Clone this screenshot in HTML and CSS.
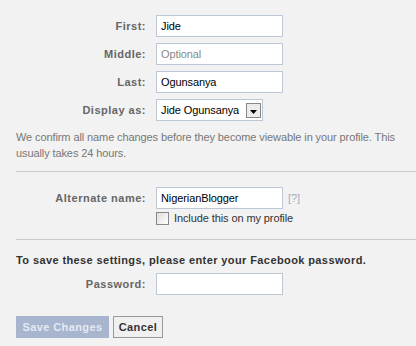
FILE: index.html
```html
<!DOCTYPE html>
<html>

<head>
  <title>Name Settings</title>
  <link rel="stylesheet" href="styles.css">
</head>

<body>
  <form class="settings">
    <div class="row">
      <label for="first">First:</label>
      <input type="text" id="first" class="field" value="Jide">
    </div>
    <div class="row">
      <label for="middle">Middle:</label>
      <input type="text" id="middle" class="field" placeholder="Optional">
    </div>
    <div class="row">
      <label for="last">Last:</label>
      <input type="text" id="last" class="field" value="Ogunsanya">
    </div>
    <div class="row">
      <label>Display as:</label>
      <div class="select">
        <span>Jide Ogunsanya</span>
        <span class="select-btn">
          <svg width="7" height="4" viewBox="0 0 7 4"><path d="M0 0h7L3.5 4z" fill="#000"/></svg>
        </span>
      </div>
    </div>
    <p class="note">We confirm all name changes before they become viewable in your profile. This usually takes 24 hours.</p>

    <div class="section">
      <div class="row alt-row">
        <label for="alt">Alternate name:</label>
        <input type="text" id="alt" class="field" value="NigerianBlogger">
        <span class="help">[?]</span>
      </div>
      <div class="row check-row">
        <span class="box"></span>
        <span>Include this on my profile</span>
      </div>
    </div>

    <div class="section password">
      <p class="prompt">To save these settings, please enter your Facebook password.</p>
      <div class="row">
        <label for="pass">Password:</label>
        <input type="password" id="pass" class="field">
      </div>
      <div class="buttons">
        <button type="button" class="btn save">Save Changes</button>
        <button type="button" class="btn cancel">Cancel</button>
      </div>
    </div>
  </form>
</body>

</html>
```

FILE: styles.css
```css
body {
  margin: 0;
  padding: 15px 0 0 16px;
  background-color: #f2f2f2;
  font-family: "Liberation Sans", Arial, sans-serif;
  font-size: 11px;
  letter-spacing: -0.1px;
  color: #333;
}

.row {
  display: flex;
  align-items: center;
  margin-bottom: 6px;
}

.row label {
  width: 130px;
  margin-right: 10px;
  text-align: right;
  font-weight: bold;
  letter-spacing: 0.5px;
  color: #666;
}

.field {
  width: 127px;
  height: 22px;
  box-sizing: border-box;
  margin: 0;
  padding: 0 4px;
  border: 1px solid #bdc7d8;
  background: #fff;
  font-family: inherit;
  font-size: 11px;
  letter-spacing: -0.1px;
  color: #000;
}

.field::placeholder {
  color: #888;
}

.select {
  width: 107px;
  height: 22px;
  box-sizing: border-box;
  display: flex;
  align-items: center;
  justify-content: space-between;
  padding: 0 1px 0 4px;
  border: 1px solid #bdc7d8;
  background: #fff;
  color: #000;
}

.select-btn {
  width: 15px;
  height: 15px;
  box-sizing: border-box;
  display: flex;
  align-items: center;
  justify-content: center;
  border: 1px solid #888;
  background: #ececec;
  padding-top: 3px;
}

.note {
  margin: 8px 0 0;
  line-height: 16px;
  color: #777;
}

.section {
  margin-top: 10px;
  border-top: 1px solid #ccc;
  padding-top: 15px;
}

.alt-row {
  margin-bottom: 1px;
}

.help {
  margin-left: 5px;
  color: #aab;
}

.check-row {
  padding-left: 140px;
  margin-bottom: 13px;
  height: 16px;
}

.box {
  width: 11px;
  height: 11px;
  margin-right: 5px;
  border: 1px solid #888;
  background: linear-gradient(135deg, #ddd, #fff);
}

.password {
  padding-top: 13px;
}

.prompt {
  margin: 0 0 6px;
  line-height: 14px;
  font-weight: bold;
  letter-spacing: 0.4px;
  color: #333;
}

.buttons {
  display: flex;
  gap: 4px;
  margin-top: 21px;
}

.btn {
  height: 22px;
  margin: 0;
  padding: 0 4px;
  font-family: inherit;
  font-size: 11px;
  font-weight: bold;
  letter-spacing: 0.4px;
}

.save {
  width: 93px;
  border: 1px solid #a7b5cf;
  background-color: #a7b5cf;
  color: #e4e9f2;
}

.cancel {
  width: 50px;
  border: 1px solid #999;
  background-color: #f0f0f0;
  color: #333;
}
```
